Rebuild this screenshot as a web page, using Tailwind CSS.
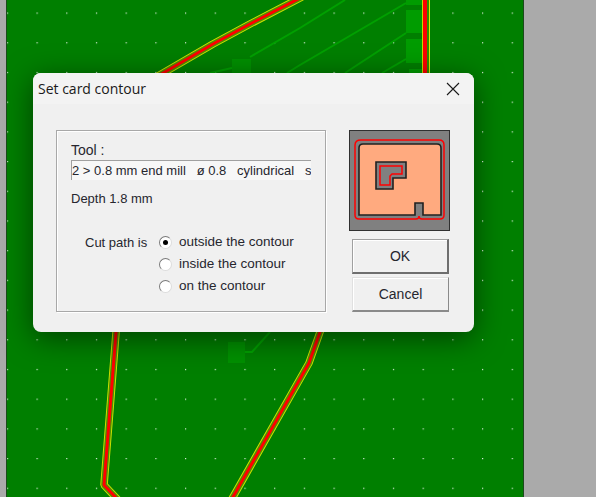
<!DOCTYPE html>
<html lang="en">
<head>
    <meta charset="UTF-8">
    <title>Set card contour</title>
    <script src="https://cdn.jsdelivr.net/npm/@tailwindcss/browser@4"></script>
</head>
<body class="bg-[#aaaaaa]">
    <div class="relative w-[596px] h-[497px] overflow-hidden">
        <!-- board -->
        <svg class="absolute left-0 top-0" width="596" height="497" viewBox="0 0 596 497">
            <defs>
                <pattern id="dots" x="36.5" y="12.5" width="29.7" height="29.7" patternUnits="userSpaceOnUse">
                    <rect width="1.2" height="1.2" fill="#d8ecd8"/>
                </pattern>
                <path id="trace1" d="M158 76L213 44L250 24L302 -3"/>
                <path id="trace2" d="M117 320L104 485L120 502"/>
                <path id="trace3" d="M325 318L309 363L229 504"/>
            </defs>
            <rect x="6" y="0" width="518" height="497" fill="#1c4a1c"/>
            <rect x="7" y="0" width="516" height="497" fill="#007f00"/>
            <rect x="7" y="0" width="516" height="497" fill="url(#dots)"/>

            <g fill="#009c00">
                <rect x="406" y="10" width="16" height="23"/>
                <rect x="406" y="39" width="16" height="24"/>
                <rect x="406" y="0" width="16" height="5"/>
                <rect x="409" y="69" width="13" height="6"/>
            </g>
            <g fill="#009000">
                <rect x="232" y="59" width="19" height="16"/>
                <rect x="228" y="342" width="17" height="21"/>
            </g>
            <g fill="none" stroke="#00a000" stroke-width="2">
                <path d="M210 73L232 68M250 57L300 28L345 0"/>
                <path d="M287 73L300 65L406 3"/>
                <path d="M345 73L406 33"/>
                <path d="M382 73L406 59"/>
                <path d="M245 352L252 352L270 332"/>
            </g>

            <g fill="none" stroke-linejoin="bevel">
                <g stroke="#d0e000" stroke-width="7.5">
                    <use href="#trace1"/><use href="#trace2"/><use href="#trace3"/>
                </g>
                <g stroke="#4a9400" stroke-width="5.6">
                    <use href="#trace1"/><use href="#trace2"/><use href="#trace3"/>
                </g>
                <g stroke="#ff0000" stroke-width="3">
                    <use href="#trace1"/><use href="#trace2"/><use href="#trace3"/>
                </g>
            </g>
            <rect x="422" y="0" width="1" height="75" fill="#c6d800"/>
            <rect x="423" y="0" width="4" height="75" fill="#ff0000"/>
            <rect x="427" y="0" width="2" height="75" fill="#2f8f00"/>
            <rect x="429" y="0" width="1" height="75" fill="#e6e600"/>
        </svg>

        <!-- dialog -->
        <div class="absolute left-[33px] top-[73px] w-[441px] h-[259px] rounded-lg bg-[#f0f0f0] shadow-[0_6px_30px_rgba(0,0,0,0.5)] font-['Liberation_Sans',sans-serif] text-[13px] text-[#26262e] overflow-hidden">
            <div class="h-[31px] bg-[#f3f3f3] flex items-center justify-between pl-[5px] pr-[14px]">
                <span class="font-['Open_Sans',sans-serif] text-[14px] text-[#1a1a1a]">Set card contour</span>
                <svg width="14" height="14" viewBox="0 0 14 14" fill="none" stroke="#1a1a1a" stroke-width="1.1">
                    <path d="M1 1L13 13M13 1L1 13"/>
                </svg>
            </div>
            <div class="flex items-start pl-[23px] pt-[26px]">
                <div class="w-[270px] h-[182px] border border-[#a8a8a8] shadow-[inset_1px_1px_0_#ffffff,1px_1px_0_#ffffff] pl-[14px] pt-[11px]">
                    <div class="leading-[17px] text-[14px]">Tool :</div>
                    <div class="mt-[1px] w-[240px] h-[20px] bg-[#f7f7f7] border-l border-t border-[#a0a0a0] leading-[19px] whitespace-nowrap overflow-hidden">2 &gt; 0.8 mm end mill &nbsp; ø 0.8 &nbsp; cylindrical &nbsp; s</div>
                    <div class="mt-[10px] leading-[17px]">Depth 1.8 mm</div>
                    <div class="flex mt-[27px] ml-[14px]">
                        <div class="leading-[17px] w-[74px]">Cut path is</div>
                        <div class="flex flex-col gap-[9px] mt-[2px]">
                            <div class="flex items-center gap-[7px] h-[13px]">
                                <span class="flex items-center justify-center w-[13px] h-[13px] rounded-full bg-white border border-[#7a7a7a] border-r-[#dcdcdc] border-b-[#dcdcdc]"><span class="w-[5px] h-[5px] rounded-full bg-black"></span></span>
                                <span class="text-[13.5px]">outside the contour</span>
                            </div>
                            <div class="flex items-center gap-[7px] h-[13px]">
                                <span class="w-[13px] h-[13px] rounded-full bg-white border border-[#7a7a7a] border-r-[#dcdcdc] border-b-[#dcdcdc]"></span>
                                <span class="text-[13.5px]">inside the contour</span>
                            </div>
                            <div class="flex items-center gap-[7px] h-[13px]">
                                <span class="w-[13px] h-[13px] rounded-full bg-white border border-[#7a7a7a] border-r-[#dcdcdc] border-b-[#dcdcdc]"></span>
                                <span class="text-[13.5px]">on the contour</span>
                            </div>
                        </div>
                    </div>
                </div>
                <div class="ml-[23px] flex flex-col items-start">
                    <svg class="block" width="101" height="101" viewBox="0 0 101 101">
                        <rect width="101" height="101" fill="#808080"/>
                        <rect x="0.5" y="0.5" width="100" height="100" fill="none" stroke="#303030"/>
                        <path d="M10 85V18Q10 14 14 14H88Q92 14 92 18V85H74V73H66V85Z" fill="#ffaa7f" stroke="#202020" stroke-width="1.6"/>
                        <path d="M27 32H57V48H44V59H27Z" fill="#808080" stroke="#202020" stroke-width="1.6"/>
                        <path d="M31 36H53V44H43L41 46V55H31Z" fill="none" stroke="#ff0000" stroke-width="1.5"/>
                        <path d="M12 10H90Q95 10 95 15V85Q95 89 91 89H73Q70 89 70 86Q70 89 67 89H10Q6 89 6 85V15Q6 10 12 10Z" fill="none" stroke="#ff0000" stroke-width="1.5"/>
                    </svg>
                    <button class="mt-[8px] ml-[3px] w-[97px] h-[35px] bg-[#f0f0f0] border border-[#a0a0a0] border-r-2 border-b-2 border-r-[#6e6e6e] border-b-[#6e6e6e] shadow-[inset_1px_1px_0_#ffffff] text-[14px]">OK</button>
                    <button class="mt-[3px] ml-[3px] w-[97px] h-[35px] bg-[#f0f0f0] border border-t-[#e0e0e0] border-l-[#e0e0e0] border-r-[#8a8a8a] border-b-2 border-b-[#8a8a8a] shadow-[inset_1px_1px_0_#ffffff] text-[14px]">Cancel</button>
                </div>
            </div>
        </div>
    </div>
</body>
</html>
